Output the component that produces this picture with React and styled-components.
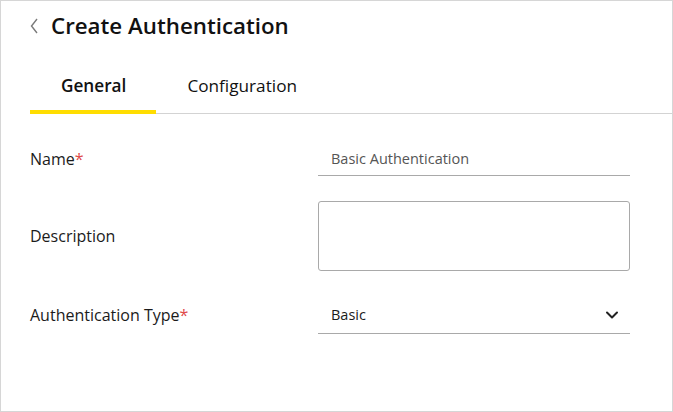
import styled, { createGlobalStyle } from 'styled-components';
import { ChevronDown } from 'lucide-react';

const GlobalStyle = createGlobalStyle`
  * { box-sizing: border-box; }
  body {
    margin: 0;
    font-family: 'Open Sans', 'Liberation Sans', sans-serif;
    color: #1b1b1b;
    background: #fff;
  }
`;

const Frame = styled.div`
  width: 673px;
  height: 412px;
  border: 1px solid #d6d6d6;
  background: #fff;
  padding-top: 10px;
`;

const Header = styled.div`
  display: flex;
  align-items: center;
  gap: 13px;
  padding-left: 29px;
  height: 30px;
`;

const BackButton = styled.button`
  display: grid;
  place-items: center;
  padding: 0;
  border: none;
  background: none;
  width: 8px;
  height: 16px;
  cursor: pointer;
`;

const Title = styled.h1`
  margin: 0;
  font-size: 22.3px;
  font-weight: 600;
  line-height: 30px;
  color: #111;
`;

const TabBar = styled.div`
  display: flex;
  margin: 23px 0 0 29px;
  border-bottom: 1px solid #d3d3d3;
`;

const Tab = styled.button`
  border: none;
  background: none;
  margin-bottom: -1px;
  padding: 10px 30px 12px 31px;
  font-family: inherit;
  font-size: 17.2px;
  line-height: 24px;
  font-weight: ${({ $active }) => ($active ? 600 : 400)};
  color: #111;
  border-bottom: 4px solid ${({ $active }) => ($active ? '#ffdd00' : 'transparent')};
  cursor: pointer;
`;

const Form = styled.div`
  display: grid;
  grid-template-columns: 288px 312px;
  align-items: center;
  row-gap: 25px;
  padding: 27px 0 0 29px;
`;

const Label = styled.label`
  font-size: 16px;
  line-height: 22px;
  color: #1b1b1b;
`;

const Required = styled.span`
  color: #e04a4a;
`;

const TextInput = styled.div`
  height: 35px;
  display: flex;
  align-items: center;
  padding: 0 12px 0 13px;
  border-bottom: 1px solid #a9a9a9;
  font-size: 14.5px;
  color: ${({ $muted }) => ($muted ? '#555' : '#1b1b1b')};
`;

const TextArea = styled.div`
  height: 70px;
  border: 1px solid #a9a9a9;
  border-radius: 3px;
`;

const Select = styled(TextInput)`
  height: 38px;
  justify-content: space-between;
  padding-right: 8px;
`;

export default function App() {
  return (
    <>
      <GlobalStyle />
      <Frame>
        <Header>
          <BackButton aria-label="Back">
            <svg width="8" height="16" viewBox="0 0 8 16" fill="none">
              <polyline points="7,1 1.5,8 7,15" stroke="#7a7a7a" strokeWidth="1.4" />
            </svg>
          </BackButton>
          <Title>Create Authentication</Title>
        </Header>
        <TabBar>
          <Tab $active>General</Tab>
          <Tab>Configuration</Tab>
        </TabBar>
        <Form>
          <Label>
            Name<Required>*</Required>
          </Label>
          <TextInput $muted>Basic Authentication</TextInput>
          <Label>Description</Label>
          <TextArea />
          <Label>
            Authentication Type<Required>*</Required>
          </Label>
          <Select>
            Basic
            <ChevronDown size={20} strokeWidth={2.4} color="#222" />
          </Select>
        </Form>
      </Frame>
    </>
  );
}
